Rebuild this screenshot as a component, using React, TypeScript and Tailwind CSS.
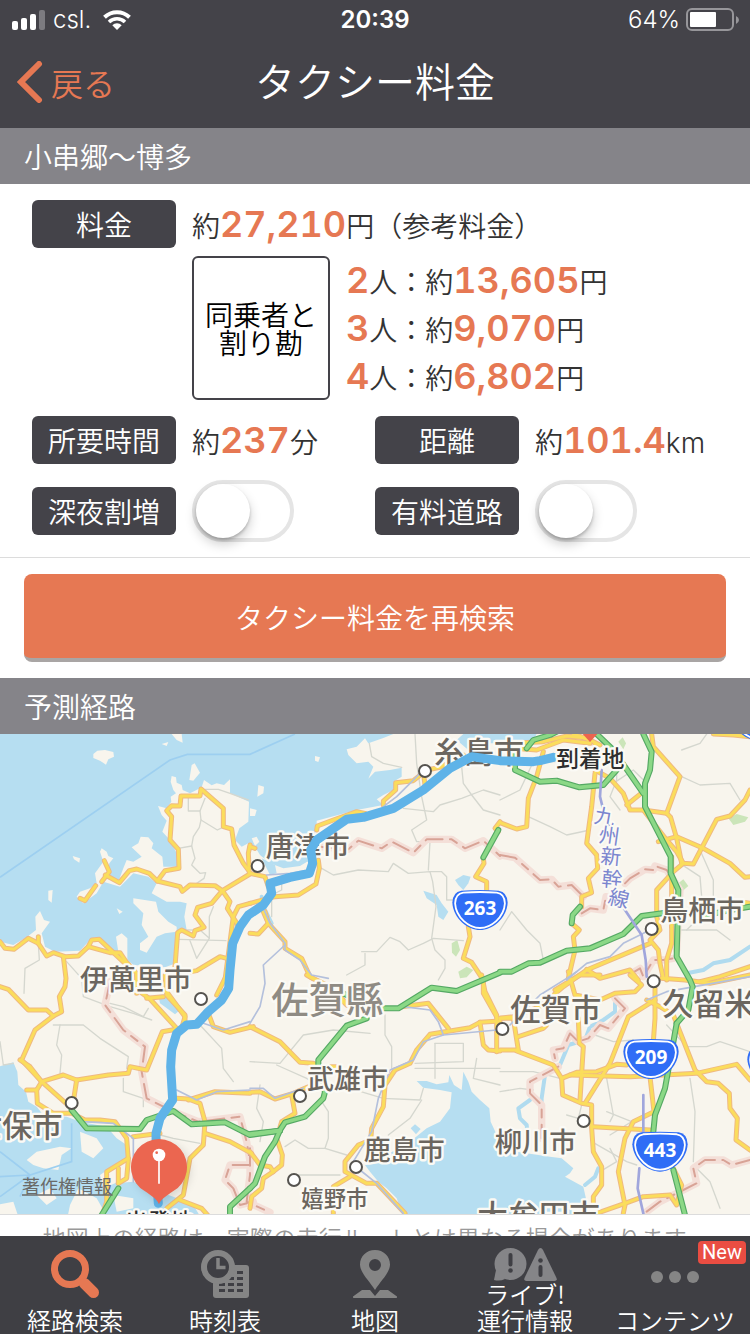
import { useState } from "react";
import type { ReactNode } from "react";

/* ---------- Map data ---------- */
/* The map is cut into six sheets; every sheet has its own origin on the canvas. */

const SHEETS = {
  A: "translate(0 0)",
  B: "translate(750 0)",
  C: "translate(1500 0)",
  D: "translate(0 735)",
  E: "translate(750 735)",
  F: "translate(1500 735)",
};

type Sheet = keyof typeof SHEETS;
type Shape = [Sheet, string];

const seas: Shape[] = [
  ["A", "-20,-20 1190,-20 1180,12 1150,24 1105,40 1095,25 1070,50 1040,58 1045,75 1070,100 1105,95 1120,110 1105,146 1125,125 1170,120 1205,113 1205,140 1185,152 1185,178 1150,195 1130,208 1150,225 1070,240 950,272 950,300 925,345 930,390 900,408 850,415 810,400 780,375 765,350 750,365 745,340 725,350 705,330 718,295 745,275 747,215 690,190 690,148 672,165 650,160 635,166 612,150 605,172 585,182 570,190 548,180 545,165 530,158 528,142 515,138 512,155 520,180 528,190 512,200 514,215 500,235 474,228 485,255 500,272 487,305 510,330 530,370 535,410 490,410 487,380 455,355 460,340 445,322 422,320 415,340 395,352 425,380 400,395 380,390 370,415 355,455 320,445 328,400 340,385 325,378 320,365 305,355 300,365 310,395 285,430 290,460 270,475 240,485 230,500 250,520 290,490 310,455 360,470 400,430 445,440 470,460 455,490 500,515 540,515 560,520 553,560 560,600 530,600 528,700 495,712 400,705 382,690 382,625 365,610 348,620 355,665 315,655 300,622 275,625 240,662 165,665 135,650 125,610 150,575 132,570 120,543 106,560 108,600 80,622 40,645 0,635 -20,640"],
  ["B", "640,12 620,30 655,60 690,40 750,40 850,30 860,12"],
  ["D", "-20,280 40,262 52,290 55,330 78,350 85,380 110,395 130,420 200,425 240,440 320,455 350,490 380,510 380,560 330,580 300,600 310,640 345,625 400,620 450,640 520,665 580,690 610,740 -20,740"],
  ["E", "465,740 440,670 410,640 385,620 360,590 345,570 395,560 400,545 480,500 530,460 570,440 600,400 605,352 570,345 520,338 500,318 530,318 560,328 595,322 598,300 612,330 635,345 640,290 655,320 665,350 690,375 718,400 722,440 745,490 800,530 900,545 935,550 970,580 960,595 945,605 1000,635 1010,680 1030,740"],
  ["B", "520,482 560,495 575,520 595,545 580,570 565,560 560,525 530,505"],
  ["B", "615,450 640,435 662,440 655,460 640,480 625,465"],
  ["D", "475,60 500,58 540,105 525,118 480,85"],
  ["B", "35,385 75,405 80,430 60,435"],
  ["E", "482,460 495,448 512,462 498,478"],
];

const islands: Shape[] = [
  ["A", "280,72 292,62 315,60 340,66 342,80 325,88 318,104 300,92 280,84"],
  ["A", "515,12 545,12 548,38 530,30"],
  ["A", "485,42 505,36 500,48"],
  ["A", "575,105 584,100 600,128 580,152 568,150"],
  ["A", "218,378 240,385 238,398 222,388"],
  ["A", "145,482 158,480 155,518 145,510"],
  ["A", "350,535 368,545 358,552"],
  ["A", "400,505 468,515 475,545 505,575 530,590 530,605 495,610 470,620 440,668 420,660 420,640 445,620 425,585 430,550 400,520"],
  ["B", "25,165 42,170 40,190 22,200"],
  ["B", "195,78 210,82 205,96 195,92"],
  ["B", "5,325 20,320 28,335 15,348"],
  ["B", "0,235 20,240 15,258 0,258"],
  ["D", "80,555 110,530 180,515 215,520 185,540 175,585 130,580 100,570"],
  ["D", "240,470 290,490 310,520 280,550 245,530"],
  ["D", "110,660 150,640 170,670 140,690"],
  ["D", "-10,690 40,680 60,740 -10,740"],
  ["D", "235,640 290,670 330,740 200,740 210,690"],
  ["D", "340,660 400,670 400,700 350,710"],
];

const parks: Shape[] = [
  ["B", "605,640 622,630 630,660 618,680 606,668"],
  ["B", "625,725 650,710 670,720 650,742 630,745"],
  ["C", "355,35 368,22 378,40 370,58"],
  ["C", "685,265 710,252 745,262 735,275 700,285"],
  ["C", "535,460 550,448 565,468 545,485"],
];

const lanes: Shape[] = [
  ["A", "565,200 565,243 600,243 615,205"],
  ["A", "615,178 655,178 690,190 745,210"],
  ["A", "600,243 603,270 652,300 668,292"],
  ["A", "603,270 598,292 580,320 575,348 585,385 575,405 600,430 617,428 612,445 590,460"],
  ["A", "535,355 575,348"],
  ["A", "640,530 628,560 628,625 600,600 560,600"],
  ["A", "535,628 678,632"],
  ["A", "628,625 590,685 570,632"],
  ["A", "115,640 118,690 75,715 72,790"],
  ["A", "200,695 245,745 250,800 330,830 400,850 455,870"],
  ["B", "358,40 365,80 400,100 455,112"],
  ["B", "495,12 500,100 515,200 530,270 485,300 500,335 540,335 535,420"],
  ["B", "460,235 550,245 570,225 635,205 700,180 750,195"],
  ["B", "635,110 640,160 665,195 700,240 750,255"],
  ["B", "215,415 250,435 325,420 415,425 430,400 475,430 540,425 548,455 558,530 545,625 555,660 585,690 585,715 565,750"],
  ["B", "540,425 575,425 590,440 590,510 615,510"],
  ["B", "335,665 380,665 420,622 450,635 475,660 520,640 550,625 640,632"],
  ["B", "345,670 345,705 290,735"],
  ["B", "95,445 95,480 65,495 65,560"],
  ["C", "0,210 60,180 100,95 200,95"],
  ["C", "85,260 150,290 200,315 270,300"],
  ["C", "0,600 35,545 80,600 120,640 130,690"],
  ["C", "545,60 600,40 620,12"],
  ["C", "545,140 600,165 690,160 720,210"],
  ["C", "540,400 600,440 605,500 600,560 560,600"],
  ["C", "600,360 640,450 640,540"],
  ["C", "540,600 650,600 690,630"],
  ["C", "350,90 350,150 330,200 360,240"],
  ["C", "340,160 400,120 440,160"],
  ["D", "160,150 250,150 300,190 385,245 380,280"],
  ["D", "180,150 170,210 185,240 180,295"],
  ["D", "0,200 10,270 40,265"],
  ["D", "330,85 370,95 430,125 445,100"],
  ["D", "370,310 370,350 430,370 430,395"],
  ["D", "600,150 665,220 670,280 700,320"],
  ["D", "480,480 520,490 600,505"],
  ["E", "0,260 90,265 160,180 250,165 360,175"],
  ["E", "80,270 170,310 200,330"],
  ["E", "30,330 20,400 40,440 30,500"],
  ["E", "105,515 135,495 175,520 225,520 290,540"],
  ["E", "215,380 235,410 235,490 225,520"],
  ["E", "405,120 405,180 425,215 425,280"],
  ["E", "300,340 400,370 510,375 520,340"],
  ["E", "415,480 480,430 515,375"],
  ["E", "145,600 270,600"],
  ["E", "495,280 750,280"],
  ["E", "555,205 555,310"],
  ["E", "555,205 640,205 640,260 495,265"],
  ["E", "680,250 670,310 750,330"],
  ["F", "0,290 100,290 180,310"],
  ["F", "0,350 60,340 100,345"],
  ["F", "285,180 340,200 400,195"],
  ["F", "500,150 560,215 620,215 660,200 750,230"],
  ["F", "570,310 585,410 580,560"],
  ["F", "320,310 340,420 330,440"],
  ["F", "200,420 235,430 245,390"],
  ["F", "320,410 395,440 330,480"],
  ["F", "275,500 380,560 410,570"],
  ["F", "580,570 630,620 660,700"],
  ["F", "300,590 350,560 330,520"],
];

const rails: Shape[] = [
  ["B", "50,435 120,430 175,420"],
  ["B", "400,230 440,200 480,160 520,120"],
  ["B", "40,535 60,580 105,640 105,660 150,690 185,735 235,745"],
  ["B", "105,645 40,705 45,760 30,830 0,880"],
  ["C", "200,750 260,700 330,680 370,640 450,600"],
  ["D", "530,345 590,375 650,350 750,345"],
  ["D", "610,145 670,165 750,140"],
  ["D", "210,405 250,440 340,445 400,490 400,620"],
  ["E", "0,340 40,340 75,370 160,340"],
  ["E", "460,95 540,105 565,140 580,180 740,165"],
  ["E", "580,180 520,200 490,255 420,285 385,370 365,470 310,560"],
  ["E", "330,585 380,625 460,715"],
  ["F", "30,150 120,60 200,10 230,-10"],
  ["F", "440,75 500,50 750,5"],
];

const borders: Shape[] = [
  ["B", "210,350 295,358 325,332 395,355 425,335 490,368 530,328 605,328 645,355 700,332 750,378"],
  ["C", "0,375 45,383 120,450 155,448 175,470 215,465 250,500"],
  ["C", "245,550 270,535 310,540 318,500"],
  ["C", "375,460 390,445 435,418 460,420 465,408 500,420 540,480 530,660"],
  ["C", "395,730 420,715 430,740 460,690 490,690 520,685"],
  ["D", "330,20 315,90 370,165 435,215 425,290 440,370 520,410 595,440 720,425 740,500 750,560"],
  ["D", "750,570 690,570 675,615 700,640 720,690 760,680"],
  ["E", "0,520 0,600 -10,680 60,712"],
  ["F", "345,70 375,100 325,160 300,150 265,190 235,200 210,175 190,220 160,225 165,250"],
  ["F", "175,275 90,320 90,355 125,390 125,490"],
  ["F", "440,710 480,680 520,660 590,625 580,580 615,555 670,555 695,570 750,555"],
];

const rivers: Shape[] = [
  ["F", "345,85 345,110 310,135 270,155 255,195 205,210 180,270 135,300 125,370 120,490"],
  ["F", "90,375 55,400 60,430 80,450 85,500"],
  ["F", "295,580 285,605 255,630"],
  ["C", "560,730 610,720 640,700 690,690 750,650"],
  ["B", "35,500 45,540 65,580"],
];

const highways: Shape[] = [
  ["A", "0,635 15,655 42,658 85,625 115,640 140,678 160,668 195,680 235,678 265,650 330,668 360,668 378,695 410,730 410,790"],
  ["A", "115,620 115,640"],
  ["A", "265,650 275,630 298,628 375,700"],
  ["A", "190,680 198,745 195,770 178,800 185,845 160,858 105,900 65,990 125,1055"],
  ["A", "0,770 25,778 85,840 140,840 160,858"],
  ["A", "240,505 255,512 287,467"],
  ["A", "313,392 328,425 305,455"],
  ["A", "316,435 358,458 388,422 410,417 448,430 472,453 540,470 547,484 570,465 645,467 667,482 750,432"],
  ["A", "472,453 495,422 537,415 535,358 510,330 515,260 500,242 515,227 540,228 543,198 600,198 603,177 670,235 670,290 695,297 702,345 730,400 745,420"],
  ["A", "750,345 745,370 748,430"],
  ["A", "667,482 635,520 593,532 585,555 612,592 585,602 580,618 545,600 533,608 523,735 500,745 500,795 555,855 555,875"],
  ["A", "667,482 690,515 682,535 720,595"],
  ["A", "750,520 715,530 700,560 675,750"],
  ["A", "520,735 590,722 660,680 680,685"],
  ["B", "0,350 15,355"],
  ["B", "0,430 45,440 55,470"],
  ["B", "200,300 202,288 250,270 320,245 345,250"],
  ["B", "205,390 208,415 198,462 145,495 75,500 0,520"],
  ["B", "0,610 25,612 55,580 40,545"],
  ["B", "45,545 55,580 105,635 105,655 155,685 180,740 240,770 290,820 345,830"],
  ["B", "400,225 400,213 437,180 437,158 490,152 530,120 570,112 640,75"],
  ["B", "520,125 525,165"],
  ["B", "750,275 735,295 745,305"],
  ["B", "700,385 702,400 677,440 710,455 710,500"],
  ["B", "655,590 660,620 640,685 665,697 700,750 700,790 740,860"],
  ["C", "130,65 110,140 85,205 80,290 50,297 0,278"],
  ["C", "285,130 275,230 260,340 290,375 293,415 265,445 275,488 245,500 245,530"],
  ["C", "215,580 238,600 220,620 225,660 205,745"],
  ["C", "285,120 330,145 370,190 390,240 430,240 500,250 512,262 530,325 545,400"],
  ["C", "430,185 380,225"],
  ["C", "455,12 460,50 540,140 500,250"],
  ["C", "430,240 500,330 530,365 550,400 580,402 650,268 690,258 735,210 750,180"],
  ["C", "475,335 530,320 610,355 690,400 735,442 750,440"],
  ["C", "550,400 520,425 470,480 470,560 480,600 450,630 475,660 480,700 490,745"],
  ["C", "515,590 515,640 500,690 500,750"],
  ["C", "515,380 515,590"],
  ["C", "450,640 260,720 190,770 120,830 40,860 0,865"],
  ["C", "260,718 300,745 390,720 415,750"],
  ["C", "640,12 700,15 750,20"],
  ["C", "690,510 750,520"],
  ["C", "600,755 660,740 750,710"],
  ["C", "35,40 130,35 200,18 270,25"],
  ["C", "40,55 110,60 190,30 270,40"],
  ["C", "220,12 270,30 300,45"],
  ["C", "285,40 285,120"],
  ["D", "60,255 90,275 125,320 110,345 112,385 160,415 215,415 255,435 300,435 345,440 380,490 385,555 380,610 355,625"],
  ["D", "80,345 110,345"],
  ["D", "125,320 190,300 230,315 325,300 385,295 390,275 440,285 487,170 545,160 555,125 500,50 495,0"],
  ["D", "125,320 215,400"],
  ["D", "230,315 220,380"],
  ["D", "410,0 420,50 450,72 530,160"],
  ["D", "440,70 490,65"],
  ["D", "625,115 640,155 690,172 760,155"],
  ["D", "680,0 650,60"],
  ["D", "530,370 565,372 600,385 615,440 610,510 570,550 550,660 500,700"],
  ["D", "615,475 690,500 755,535"],
  ["D", "565,375 645,350 750,355"],
  ["D", "400,485 480,475"],
  ["D", "540,675 605,700 640,740"],
  ["D", "385,550 320,590 320,680 300,740"],
  ["D", "355,580 355,625"],
  ["E", "0,155 90,200 150,262 190,265 210,275 265,275"],
  ["E", "0,352 30,350 75,372 130,355 175,335"],
  ["E", "125,360 135,415 95,440 80,490 97,540 95,570 70,590 40,610 35,640 5,665 0,700"],
  ["E", "0,530 30,570 60,575 70,590"],
  ["E", "170,0 240,40 290,90"],
  ["E", "455,95 535,85 595,160"],
  ["E", "435,285 480,265 500,225 540,178 660,158 690,142 750,138"],
  ["E", "695,0 705,50 740,120 740,230"],
  ["E", "690,142 700,210 715,225 750,228"],
  ["E", "435,285 405,330 400,395 365,460 362,495 325,510 285,560 285,590 350,625 380,625 465,715"],
  ["E", "300,605 250,635 250,715"],
  ["F", "0,130 40,130 55,225 0,225"],
  ["F", "55,185 130,160 140,150"],
  ["F", "50,228 160,270 185,310 188,360 245,385 275,390 275,460 280,530 305,575 305,630 280,665 280,715"],
  ["F", "235,130 238,205 250,215 240,375"],
  ["F", "205,-10 225,60 300,75 345,55 405,50 425,30 390,0"],
  ["F", "165,45 240,0 300,0"],
  ["F", "465,75 385,125 330,265 255,385"],
  ["F", "465,40 465,130 460,200"],
  ["F", "440,75 480,95 520,120 585,285 620,320 655,325 688,355 690,400 712,430 708,495 750,525"],
  ["F", "185,310 230,292 290,290 350,268 380,270"],
  ["F", "210,300 390,305 590,295 710,268 750,315"],
  ["F", "450,305 462,410 400,440 375,490 355,590 375,690 370,715"],
  ["F", "280,455 450,465"],
  ["F", "520,580 545,630 530,690 510,660 430,665 375,685 290,715"],
  ["F", "485,10 555,15 630,25 750,0"],
];

const expressways: Shape[] = [
  ["B", "745,300 700,382"],
  ["C", "45,70 45,120 120,155 170,152 238,172 310,165 350,120"],
  ["C", "80,55 100,30 150,15 200,-10"],
  ["C", "430,12 455,65 450,120 435,160 435,230 512,380 512,430 535,480 530,680 570,750 578,770 565,840 530,880"],
  ["C", "290,12 340,60 430,190"],
  ["C", "240,530 218,555 215,580"],
  ["C", "600,560 690,540 750,530"],
  ["C", "520,545 425,558 370,612 270,655 200,662 120,698 85,700 35,725 0,725"],
  ["B", "750,728 620,783 545,773 445,835 400,835"],
  ["D", "215,405 260,460 420,462 440,435 520,408 575,448 675,442 750,480 840,467"],
  ["D", "355,640 305,720"],
  ["D", "750,640 690,695 690,720"],
  ["E", "280,55 350,90"],
  ["E", "350,130 290,152 205,255 205,300 225,350 220,370 165,425 105,442 90,465 75,500 45,545 15,625 0,640"],
  ["E", "0,477 90,467"],
  ["F", "530,145 515,230 495,340 465,420 460,470"],
  ["F", "520,585 555,720"],
];

const bullet: Shape[] = [
  ["C", "305,120 300,200 310,240"],
  ["C", "365,525 425,615 437,690 440,740"],
  ["F", "430,360 430,470"],
  ["F", "418,580 413,640 430,715"],
];

const routeLine =
  "1660,82 1620,92 1600,95 1500,92 1415,80 1350,115 1270,180 1180,235 1090,262 1040,268 1015,285 950,330 932,360 938,400 928,430 870,442 810,460 815,490 790,525 745,555 720,590 698,640 690,720 686,775 665,810 625,845 590,883 560,885 530,910 515,960 512,1010 518,1110 480,1165 468,1210 470,1350 475,1420";

const towns: [number, number][] = [
  [773, 408],
  [1275, 123],
  [1955, 597],
  [1961, 754],
  [603, 807],
  [215, 1119],
  [900, 1098],
  [1507, 897],
  [1751, 1173],
  [1068, 1311],
  [882, 1350],
];

type Label = { name: string; x: number; y: number; size: number; tone: string };

const cityLabels: Label[] = [
  { name: "糸島市", x: 1302, y: 98, size: 90, tone: "fill-[#6b665f]" },
  { name: "唐津市", x: 797, y: 382, size: 84, tone: "fill-[#6b665f]" },
  { name: "鳥栖市", x: 1981, y: 572, size: 84, tone: "fill-[#6b665f]" },
  { name: "伊萬里市", x: 240, y: 780, size: 84, tone: "fill-[#6b665f]" },
  { name: "佐賀縣", x: 814, y: 853, size: 112, tone: "fill-[#8f8b84]" },
  { name: "佐賀市", x: 1531, y: 872, size: 91, tone: "fill-[#6b665f]" },
  { name: "久留米市", x: 1987, y: 855, size: 93, tone: "fill-[#6b665f]" },
  { name: "佐世保市", x: -176, y: 1222, size: 91, tone: "fill-[#6b665f]" },
  { name: "武雄市", x: 921, y: 1076, size: 81, tone: "fill-[#6b665f]" },
  { name: "鹿島市", x: 1091, y: 1290, size: 81, tone: "fill-[#6b665f]" },
  { name: "嬉野市", x: 904, y: 1430, size: 67, tone: "fill-[#6b665f]" },
  { name: "柳川市", x: 1484, y: 1267, size: 82, tone: "fill-[#6b665f]" },
  { name: "大牟田市", x: 1432, y: 1490, size: 92, tone: "fill-[#6b665f]" },
];

const stopLabels: Label[] = [
  { name: "到着地", x: 1669, y: 112, size: 68, tone: "fill-[#2e2e2e]" },
  { name: "出発地", x: 375, y: 1500, size: 68, tone: "fill-[#2e2e2e]" },
];

const shields: [number, number, string][] = [
  [1440, 540, "263"],
  [1953, 987, "209"],
  [1980, 1265, "443"],
  [2275, -28, ""],
  [2325, 1010, ""],
];

const SHIELD = "M-56-58Q0-62 56-58Q82-54 83-22C80 26 36 60 0 60S-80 26-83-22Q-82-54-56-58Z";

function Lines({ data, className }: { data: Shape[]; className: string }) {
  return (
    <g className={className} fill="none" strokeLinecap="round" strokeLinejoin="round">
      {data.map(([sheet, s], i) => (
        <polyline key={i} transform={SHEETS[sheet]} points={s} />
      ))}
    </g>
  );
}

function Areas({ data, className }: { data: Shape[]; className: string }) {
  return (
    <g className={className}>
      {data.map(([sheet, s], i) => (
        <polygon key={i} transform={SHEETS[sheet]} points={s} />
      ))}
    </g>
  );
}

function MapLabels({ data }: { data: Label[] }) {
  return (
    <g strokeLinejoin="round" className="font-medium">
      {data.map((l) => (
        <text
          key={l.name}
          x={l.x}
          y={l.y}
          fontSize={l.size}
          paintOrder="stroke"
          className={`stroke-[#fbfaf5] stroke-[14px] ${l.tone}`}
        >
          {l.name}
        </text>
      ))}
    </g>
  );
}

function RouteMap() {
  return (
    <svg
      viewBox="0 12 2250 1440"
      preserveAspectRatio="xMidYMid slice"
      className="block h-[480px] w-full bg-[#f8f5ed] font-['Noto_Sans_CJK_JP',sans-serif]"
      role="img"
      aria-label="予測経路の地図"
    >
      <Areas data={seas} className="fill-[#b6def1]" />
      <Areas data={islands} className="fill-[#f8f5ed]" />
      <Areas data={parks} className="fill-[#cbe5b9]" />
      <g fill="none" className="stroke-[#9dcff0] stroke-[5px]">
        <path d="M0 442 510 90 562 73H750L885 12" />
        <path d="M0 1265 90 1335 215 1295V1180M90 1335 0 1340M90 1335 0 1400M90 1335 60 1400" />
      </g>
      <Lines data={lanes} className="stroke-[#d5d7cf] stroke-[4px]" />
      <Lines data={rivers} className="stroke-[#b0dbef] stroke-[12px]" />
      <Lines data={borders} className="stroke-[#f4dfd8] stroke-[22px]" />
      <g strokeDasharray="52 22 24 22">
        <Lines data={borders} className="stroke-[#d8a396] stroke-[6px]" />
      </g>
      <Lines data={highways} className="stroke-[#efb982] stroke-[15px]" />
      <Lines data={highways} className="stroke-[#fbdd5c] stroke-[9px]" />
      <Lines data={rails} className="stroke-[#b4c0dc] stroke-[5px]" />
      <Lines data={expressways} className="stroke-[#55a964] stroke-[18px]" />
      <Lines data={expressways} className="stroke-[#8bd886] stroke-[11px]" />
      <Lines data={bullet} className="stroke-[#a0a6dc] stroke-[8px]" />

      <g className="fill-white stroke-[#55534f] stroke-[6px]">
        {towns.map(([x, y]) => (
          <circle key={`${x}-${y}`} cx={x} cy={y} r="18" />
        ))}
      </g>

      {shields.map(([x, y, n]) => (
        <g key={`${x}-${y}`} transform={`translate(${x} ${y})`}>
          <path d={SHIELD} className="fill-[#2f6df6]" />
          <path d={SHIELD} transform="scale(.9)" fill="none" className="stroke-white stroke-[6px]" />
          {n && (
            <text
              y="16"
              textAnchor="middle"
              fontSize="57"
              className="fill-white font-['Noto_Sans',sans-serif] font-bold"
            >
              {n}
            </text>
          )}
        </g>
      ))}

      <MapLabels data={cityLabels} />
      <text
        x="1780 1794 1800 1803 1821"
        y="277 335 399 467 520"
        rotate="10 8 5 5 14"
        fontSize="62"
        paintOrder="stroke"
        strokeLinejoin="round"
        className="fill-[#7b86cf] stroke-[#fbfaf5] stroke-[12px]"
      >
        九州新幹線
      </text>

      <polyline
        points={routeLine}
        fill="none"
        strokeLinecap="round"
        strokeLinejoin="round"
        className="stroke-[#5fb3e8] stroke-[27px]"
      />

      <MapLabels data={stopLabels} />

      <path d="M1748 12h44l-22 24Z" className="fill-[#ec6450]" />
      <path
        d="M477 1423C470 1405 450 1395 435 1384A84 84 0 1 1 519 1384C504 1395 484 1405 477 1423Z"
        className="fill-[#eb6650] drop-shadow-[10px_10px_12px_rgba(0,0,0,0.12)]"
      />
      <path d="M477 1290V1361" className="stroke-white stroke-[5px]" />
      <circle cx="477" cy="1275" r="19" className="fill-white" />
      <circle cx="470" cy="1268" r="4" className="fill-[#eb6650]" />

      <a href="#copyright">
        <text x="66" y="1389" fontSize="54" className="fill-[#6a6a68]">
          著作権情報
        </text>
        <path d="M66 1395H338" className="stroke-[#6a6a68] stroke-[5px]" />
      </a>
    </svg>
  );
}

/* ---------- Page parts ---------- */

function StatusBar() {
  return (
    <div className="grid h-10 grid-cols-3 items-center px-3 font-['Inter',sans-serif] text-2xl leading-10">
      <div className="flex items-center gap-2">
        <svg viewBox="0 0 33 20" className="h-5 w-[33px]" fill="white" aria-hidden="true">
          <rect x="0" y="11" width="6" height="9" rx="2" />
          <rect x="9" y="8" width="6" height="12" rx="2" />
          <rect x="18" y="4" width="6" height="16" rx="2" />
          <rect x="27" y="0" width="6" height="20" rx="2" opacity=".3" />
        </svg>
        <span className="font-light">csl.</span>
        <svg viewBox="0 0 28 20" className="ml-1 h-5 w-7" fill="none" stroke="white" aria-hidden="true">
          <path d="M1.5 7.2a18 18 0 0 1 25 0" strokeWidth="4" />
          <path d="M6 12a11.500 11.500 0 0 1 16 0" strokeWidth="3.600" />
          <path d="M14 20 9.300 15.300a6.700 6.700 0 0 1 9.400 0Z" fill="white" stroke="none" />
        </svg>
      </div>
      <span className="text-center font-semibold">20:39</span>
      <div className="flex items-center justify-end gap-1.5">
        <span className="font-light">64%</span>
        <svg viewBox="0 0 54 24" className="-mr-0.5 h-6 w-[54px]" aria-hidden="true">
          <rect x="1" y="1" width="46" height="21" rx="5" fill="none" stroke="#97969a" strokeWidth="2" />
          <rect x="4" y="4" width="26" height="15" rx="1" fill="white" />
          <path d="M50 8q3 1.500 3 4t-3 4Z" fill="#97969a" />
        </svg>
      </div>
    </div>
  );
}

function SectionTitle({ children }: { children: ReactNode }) {
  return <h2 className="h-14 bg-[#858489] px-6 text-[28px] leading-[56px] font-[350] text-white">{children}</h2>;
}

function Tag({ children }: { children: ReactNode }) {
  return (
    <span className="block h-12 w-36 shrink-0 rounded-md bg-[#444349] text-center text-[28px] leading-[48px] font-[350] text-white">
      {children}
    </span>
  );
}

function Num({ children }: { children: ReactNode }) {
  return (
    <b className="font-['Inter',sans-serif] text-4xl leading-[48px] font-semibold text-[#e67853] tabular-nums">
      {children}
    </b>
  );
}

function Toggle({ id, label }: { id: string; label: string }) {
  const [on, setOn] = useState(false);
  return (
    <div className="flex items-center gap-4">
      <label htmlFor={id}>
        <Tag>{label}</Tag>
      </label>
      <input
        id={id}
        type="checkbox"
        role="switch"
        checked={on}
        onChange={() => setOn(!on)}
        className="h-[62px] w-[102px] appearance-none rounded-full border-4 border-[#e5e5e5] bg-white before:block before:size-[54px] before:rounded-full before:bg-white before:shadow-[0_6px_12px_rgba(0,0,0,0.2),0_2px_3px_rgba(0,0,0,0.2)] before:transition-transform checked:bg-[#e67853] checked:before:translate-x-10"
      />
    </div>
  );
}

const shares = [
  { people: "2", fare: "13,605" },
  { people: "3", fare: "9,070" },
  { people: "4", fare: "6,802" },
];

function SearchIcon() {
  return (
    <svg viewBox="0 0 48 48" className="size-12" fill="none" stroke="#e67853" aria-hidden="true">
      <circle cx="19" cy="19" r="15.500" strokeWidth="7" />
      <path d="m30 30 3 3" strokeWidth="8" />
      <path d="m33.500 33.500 9 9" strokeWidth="11" strokeLinecap="round" />
    </svg>
  );
}

function TimetableIcon() {
  return (
    <svg viewBox="0 0 48 48" className="size-12" aria-hidden="true">
      <rect x="12" y="15" width="36" height="33" rx="3" fill="#858585" />
      <g fill="#3f3f44">
        <path d="M36 21h6v3h-6zM36 27h6v3h-6zM36 33h6v3h-6zM36 39h6v3h-6zM27 27h6v3h-6zM27 33h6v3h-6zM27 39h6v3h-6zM18 33h6v3h-6zM18 39h6v3h-6z" />
      </g>
      <circle cx="17" cy="17" r="14" fill="#3f3f44" stroke="#858585" strokeWidth="6" />
      <path d="M17 8v9.500h7.500" fill="none" stroke="#858585" strokeWidth="3.500" />
    </svg>
  );
}

function PlaceIcon() {
  return (
    <svg viewBox="0 0 48 48" className="size-12" fill="#858585" aria-hidden="true">
      <path
        fillRule="evenodd"
        d="M24 0C15.500 0 9 6.300 9 14.500c0 8 9 16 15 25.500 6-9.500 15-17.500 15-25.500C39 6.300 32.500 0 24 0Zm0 9a6 6 0 1 1 0 12 6 6 0 0 1 0-12Z"
      />
      <path d="M11 40h8l5 6 5-6h8l9 6.500q.5 1.500-1 1.500H3q-1.500 0-1-1.500Z" />
    </svg>
  );
}

function LiveIcon() {
  return (
    <svg viewBox="0 0 63 33" className="-mt-0.5 h-[33px] w-[63px]" aria-hidden="true">
      <g fill="#858588">
        <circle cx="16.500" cy="16" r="16" />
        <path d="M2 22 0 32q6 1.500 11-1Z" />
        <path d="M46.500 0q1.500 0 2.500 2l13.500 28q1 3-2 3h-28q-3 0-2-3L44 2q1-2 2.500-2Z" />
      </g>
      <g stroke="#3f3f44" strokeWidth="4" strokeLinecap="round">
        <path d="M16.500 7v9.500M46.500 19v8" />
      </g>
      <circle cx="16.500" cy="22.500" r="2.300" fill="#3f3f44" />
      <circle cx="46.500" cy="12.500" r="2.300" fill="#3f3f44" />
    </svg>
  );
}

function MoreIcon() {
  return (
    <svg viewBox="0 0 48 48" className="size-12" fill="#858585" aria-hidden="true">
      <circle cx="6" cy="27" r="6" />
      <circle cx="24" cy="27" r="6" />
      <circle cx="42" cy="27" r="6" />
    </svg>
  );
}

function NavItem({ icon, children, badge }: { icon: ReactNode; children: ReactNode; badge?: string }) {
  return (
    <a href="#tab" className="relative flex h-full flex-col items-center justify-between pt-[14px] pb-[3px]">
      {icon}
      <span className="text-center text-2xl leading-[26px] font-[350] whitespace-nowrap text-white">{children}</span>
      {badge && (
        <span className="absolute top-[5px] right-1 rounded-sm bg-[#ea4d42] px-1 font-['Roboto',sans-serif] text-xl leading-[23px] text-white">
          {badge}
        </span>
      )}
    </a>
  );
}

export default function App() {
  return (
    <div className="flex h-screen flex-col bg-white font-['Noto_Sans_CJK_JP',sans-serif]">
      <header className="h-32 shrink-0 bg-[#444349] text-white">
        <StatusBar />
        <div className="grid h-20 grid-cols-[1fr_auto_1fr] items-center">
          <a href="#back" className="flex items-center gap-2 pt-1 pl-[17px] text-[32px] leading-10 font-[350] text-[#e67853]">
            <svg viewBox="0 0 26 42" className="h-[42px] w-[26px]" fill="none" stroke="currentColor" aria-hidden="true">
              <path d="M22 3 4 21l18 18" strokeWidth="6" strokeLinecap="round" strokeLinejoin="miter" />
            </svg>
            戻る
          </a>
          <h1 className="text-[40px] leading-[80px] font-[350]">タクシー料金</h1>
        </div>
      </header>

      <main className="min-h-0 flex-1 overflow-y-auto [scrollbar-width:none]">
        <SectionTitle>小串郷〜博多</SectionTitle>

        <section className="border-b border-[#dcdcdc] pt-4 pb-[15px] text-[28px] leading-[48px] font-[350] text-[#333]">
          <div className="flex gap-4 pl-8">
            <Tag>料金</Tag>
            <p className="h-12">
              約<Num>27,210</Num>円（参考料金）
            </p>
          </div>
          <div className="mt-2 flex gap-4 pl-48">
            <button
              type="button"
              className="h-36 w-[138px] shrink-0 rounded-md border-2 border-[#444349] text-[28px] leading-7 text-black"
            >
              同乗者と
              <br />
              割り勘
            </button>
            <ul>
              {shares.map((s) => (
                <li key={s.people} className="h-12 whitespace-nowrap">
                  <Num>{s.people}</Num>人：約<Num>{s.fare}</Num>円
                </li>
              ))}
            </ul>
          </div>
          <div className="mt-4 grid grid-cols-2 gap-y-4">
            <div className="flex gap-4 pl-8">
              <Tag>所要時間</Tag>
              <p className="h-12">
                約<Num>237</Num>分
              </p>
            </div>
            <div className="flex gap-4">
              <Tag>距離</Tag>
              <p className="h-12">
                約<Num>101.4</Num>
                <span className="font-['Inter',sans-serif] font-light">km</span>
              </p>
            </div>
            <div className="pl-8">
              <Toggle id="late-night" label="深夜割増" />
            </div>
            <Toggle id="toll-road" label="有料道路" />
          </div>
        </section>

        <div className="px-6 py-4">
          <button
            type="button"
            className="block h-[88px] w-full rounded-lg border-b-4 border-[#a9a5a4] bg-[#e67853] pt-0.5 text-[28px] font-[350] text-white"
          >
            タクシー料金を再検索
          </button>
        </div>

        <SectionTitle>予測経路</SectionTitle>
        <RouteMap />
        <p className="border-t border-[#dcdcdc] pt-1.5 text-center text-[23px] leading-8 font-[350] whitespace-nowrap text-[#999]">
          地図上の経路は、実際の走行ルートとは異なる場合があります。
        </p>
      </main>

      <nav className="grid h-[98px] shrink-0 grid-cols-5 bg-[#3f3f44]">
        <NavItem icon={<SearchIcon />}>経路検索</NavItem>
        <NavItem icon={<TimetableIcon />}>時刻表</NavItem>
        <NavItem icon={<PlaceIcon />}>地図</NavItem>
        <NavItem icon={<LiveIcon />}>
          ライブ!
          <br />
          運行情報
        </NavItem>
        <NavItem icon={<MoreIcon />} badge="New">
          コンテンツ
        </NavItem>
      </nav>
    </div>
  );
}
